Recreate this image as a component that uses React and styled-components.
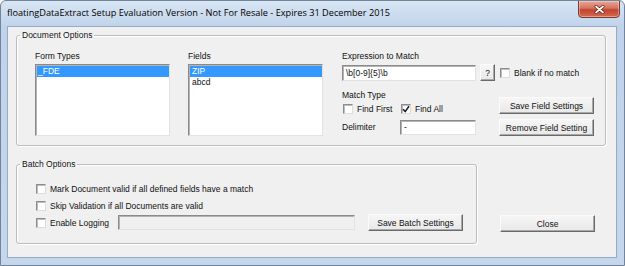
import React from 'react';
import styled, { createGlobalStyle } from 'styled-components';

const GlobalStyle = createGlobalStyle`
  html, body {
    margin: 0;
    padding: 0;
    background: #fff;
  }
  body {
    font-family: "Liberation Sans", Arial, sans-serif;
    font-size: 8.5px;
    color: #111;
  }
`;

const Window = styled.div`
  width: 625px;
  height: 266px;
  box-sizing: border-box;
  display: flex;
  flex-direction: column;
  border: 1px solid #71849c;
  border-radius: 6px 6px 0 0;
  background: linear-gradient(#d8e6f4, #c0d3ea 26px, #c5d7ec);
  overflow: hidden;
`;

const TitleBar = styled.div`
  height: 25px;
  display: flex;
  align-items: flex-start;
  justify-content: space-between;
  padding-left: 6px;
`;

const Title = styled.div`
  font-family: "Open Sans", "Liberation Sans", sans-serif;
  font-size: 9.2px;
  line-height: 12px;
  margin-top: 6px;
  color: #000;
`;

const CloseBox = styled.div`
  width: 42px;
  height: 18px;
  margin-right: 4px;
  margin-top: -1px;
  box-sizing: border-box;
  display: flex;
  align-items: center;
  justify-content: center;
  border: 1px solid #7d3a2e;
  border-radius: 0 0 4px 4px;
  background: linear-gradient(#e9a797, #d5735e 45%, #c2432d 55%, #d26c52);
  box-shadow: inset 0 0 0 1px rgba(255, 255, 255, 0.35);
`;

const Client = styled.div`
  flex: 1;
  margin: 0 7px 7px 6px;
  border: 1px solid #98abc4;
  background: #f0f0f0;
  padding: 3px 10px 0 8px;
  display: flex;
  flex-direction: column;
`;

const Group = styled.fieldset`
  margin: 0;
  min-width: 0;
  box-sizing: border-box;
  border: 1px solid #bdbdbd;
  border-radius: 3px;
  box-shadow: inset 1px 1px 0 #fff, 1px 1px 0 #fff;
  padding: ${p => p.$pad};
  width: ${p => (p.$w ? `${p.$w}px` : 'auto')};
`;

const Legend = styled.legend`
  margin-left: -15px;
  padding: 0 2px;
  font-size: 8.5px;
  line-height: 11px;
  color: #111;
`;

const DocBody = styled.div`
  display: flex;
  align-items: flex-start;
`;

const Column = styled.div`
  display: flex;
  flex-direction: column;
  margin-right: ${p => p.$gap || 0}px;
`;

const Label = styled.div`
  line-height: 11px;
  height: 11px;
  white-space: nowrap;
  margin-top: ${p => p.$mt || 0}px;
`;

const ListBox = styled.div`
  width: 135px;
  height: 72px;
  margin-top: 2px;
  box-sizing: border-box;
  background: #fff;
  border: 1px solid;
  border-color: #8a8a8a #e2e2e2 #e2e2e2 #8a8a8a;
  box-shadow: inset 1px 1px 0 #b4b4b4;
  padding: 1px 0 0 1px;
`;

const ListItem = styled.div`
  height: 11px;
  line-height: 11px;
  padding-left: ${p => p.$indent}px;
  background: ${p => (p.$selected ? '#3399ff' : 'transparent')};
  color: ${p => (p.$selected ? '#fff' : '#111')};
  white-space: nowrap;
`;

const TextBox = styled.div`
  width: ${p => p.$w}px;
  height: ${p => p.$h || 15}px;
  box-sizing: border-box;
  background: ${p => (p.$disabled ? '#f0f0f0' : '#fff')};
  border: 1px solid;
  border-color: #8a8a8a #e2e2e2 #e2e2e2 #8a8a8a;
  box-shadow: inset 1px 1px 0 #b4b4b4;
  padding-left: 3px;
  line-height: ${p => (p.$h || 15) - 2}px;
  white-space: nowrap;
  overflow: hidden;
`;

const Row = styled.div`
  display: flex;
  align-items: ${p => p.$align || 'center'};
  justify-content: ${p => p.$justify || 'flex-start'};
  height: ${p => (p.$h ? `${p.$h}px` : 'auto')};
  margin-top: ${p => p.$mt || 0}px;
`;

const Button = styled.div`
  width: ${p => p.$w || 95}px;
  height: ${p => p.$h || 17}px;
  box-sizing: border-box;
  display: flex;
  align-items: center;
  justify-content: center;
  margin-left: ${p => p.$ml || 0}px;
  margin-top: ${p => p.$mt || 0}px;
  margin-bottom: ${p => p.$mb || 0}px;
  background: linear-gradient(#f6f6f6, #e8e8e8);
  border: 1px solid;
  border-color: #fbfbfb #6a6a6a #6a6a6a #fbfbfb;
  box-shadow: inset -1px -1px 0 #a9a9a9;
  color: #111;
  white-space: nowrap;
`;

const CheckWrap = styled.div`
  display: flex;
  align-items: center;
  width: ${p => (p.$w ? `${p.$w}px` : 'auto')};
  margin-left: ${p => p.$ml || 0}px;
  white-space: nowrap;
`;

const CheckSquare = styled.span`
  width: 10px;
  height: 10px;
  box-sizing: border-box;
  flex: none;
  display: flex;
  align-items: center;
  justify-content: center;
  margin-right: 4px;
  background: #fff;
  border: 1px solid;
  border-color: #8c8c8c #dcdcdc #dcdcdc #8c8c8c;
  box-shadow: inset 1px 1px 0 #bdbdbd;
`;

const Sub = styled.div`
  display: flex;
  flex-direction: column;
  width: ${p => (p.$w ? `${p.$w}px` : 'auto')};
  margin-left: ${p => p.$ml || 0}px;
  padding-top: ${p => p.$pt || 0}px;
`;

const Bottom = styled.div`
  display: flex;
  align-items: flex-end;
  margin-top: 13px;
`;

function Check({ label, checked, w, ml }) {
  return (
    <CheckWrap $w={w} $ml={ml}>
      <CheckSquare>
        {checked && (
          <svg width="8" height="8" viewBox="0 0 8 8">
            <path d="M1 4.2 L3.2 6.6 L7 1.2" fill="none" stroke="#1e1e1e" strokeWidth="1.6" />
          </svg>
        )}
      </CheckSquare>
      {label}
    </CheckWrap>
  );
}

export default function App() {
  return (
    <>
      <GlobalStyle />
      <Window>
        <TitleBar>
          <Title>floatingDataExtract Setup Evaluation Version - Not For Resale - Expires 31 December 2015</Title>
          <CloseBox>
            <svg width="11" height="9" viewBox="0 0 11 9">
              <path d="M2 1.5 L9 7.5 M9 1.5 L2 7.5" stroke="#5a1f16" strokeWidth="3" strokeLinecap="round" />
              <path d="M2 1.5 L9 7.5 M9 1.5 L2 7.5" stroke="#fff" strokeWidth="1.7" strokeLinecap="round" />
            </svg>
          </CloseBox>
        </TitleBar>
        <Client>
          <Group $pad="10px 0 9px 18px">
            <Legend>Document Options</Legend>
            <DocBody>
              <Column $gap={18}>
                <Label>Form Types</Label>
                <ListBox>
                  <ListItem $selected $indent={1}>_FDE</ListItem>
                </ListBox>
              </Column>
              <Column $gap={19}>
                <Label>Fields</Label>
                <ListBox>
                  <ListItem $selected $indent={2}>ZIP</ListItem>
                  <ListItem $indent={2}>abcd</ListItem>
                </ListBox>
              </Column>
              <Column>
                <Label>Expression to Match</Label>
                <Row $mt={2}>
                  <TextBox $w={134} $h={16}>\b[0-9]{'{5}'}\b</TextBox>
                  <Button $w={15} $ml={4}>?</Button>
                  <Check label="Blank if no match" ml={5} />
                </Row>
                <Row $align="flex-start">
                  <Sub $w={134} $pt={9}>
                    <Label>Match Type</Label>
                    <Row $h={13} $mt={1}>
                      <Check label="Find First" w={58} ml={1} />
                      <Check label="Find All" checked />
                    </Row>
                    <Row $mt={5} $justify="space-between">
                      <Label>Delimiter</Label>
                      <TextBox $w={76} $h={15}>-</TextBox>
                    </Row>
                  </Sub>
                  <Sub $ml={23} $pt={16}>
                    <Button>Save Field Settings</Button>
                    <Button $mt={5}>Remove Field Setting</Button>
                  </Sub>
                </Row>
              </Column>
            </DocBody>
          </Group>
          <Bottom>
            <Group $pad="10px 0 12px 18px" $w={461}>
              <Legend>Batch Options</Legend>
              <Row $h={17}>
                <Check label="Mark Document valid if all defined fields have a match" ml={1} />
              </Row>
              <Row $h={17}>
                <Check label="Skip Validation if all Documents are valid" ml={1} />
              </Row>
              <Row $h={17}>
                <Check label="Enable Logging" w={82} ml={1} />
                <TextBox $w={237} $h={15} $disabled />
                <Button $ml={13}>Save Batch Settings</Button>
              </Row>
            </Group>
            <Button $ml={23} $mb={12}>Close</Button>
          </Bottom>
        </Client>
      </Window>
    </>
  );
}
